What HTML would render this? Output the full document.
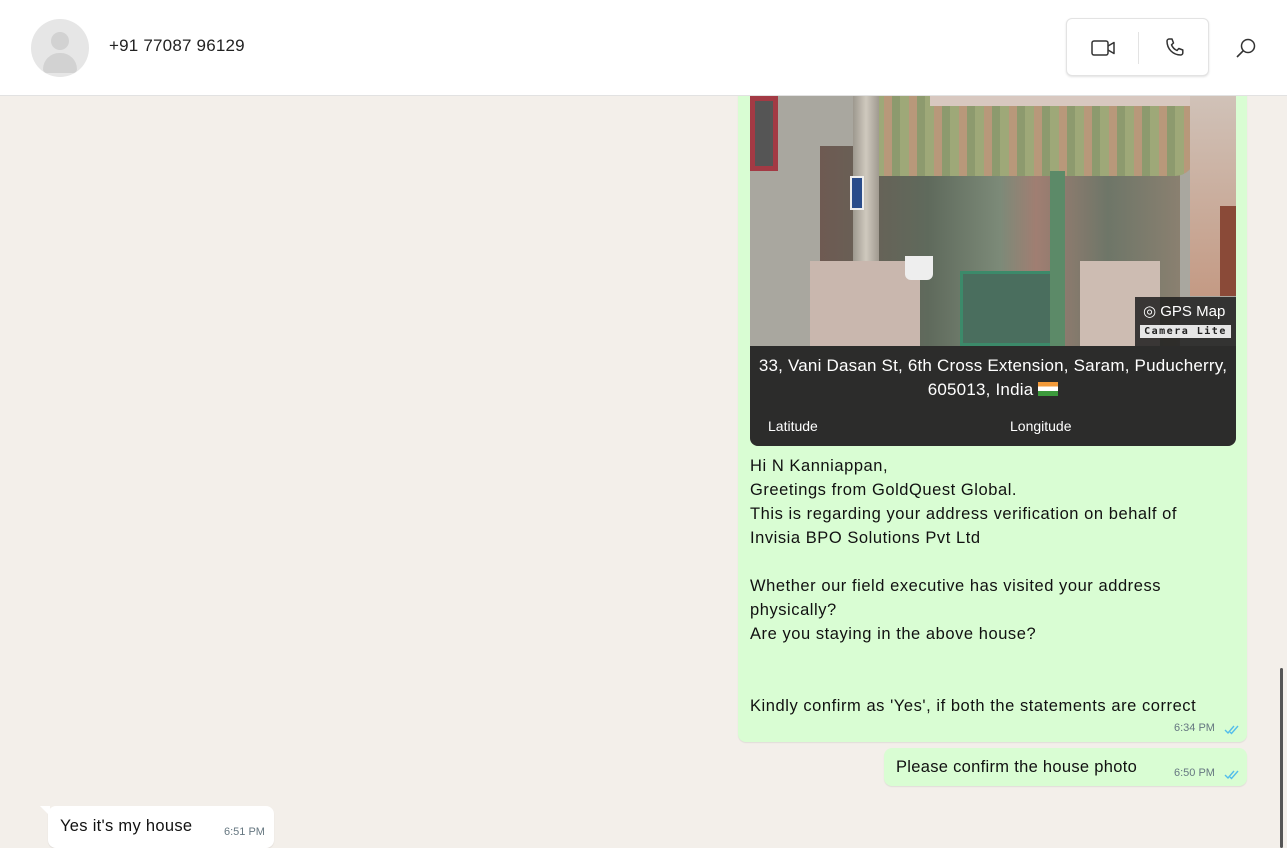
<!DOCTYPE html>
<html><head><meta charset="utf-8"><style>
*{margin:0;padding:0;box-sizing:border-box}
body{width:1287px;height:848px;overflow:hidden;font-family:"Segoe UI","Liberation Sans","DejaVu Sans",sans-serif;background:#f3efea;position:relative;color:#111}
.hdr{position:absolute;left:0;top:0;width:1287px;height:96px;background:#fff;border-bottom:1px solid #e2e2e2}
.av{position:absolute;left:31px;top:19px;width:58px;height:58px;border-radius:50%;background:#e6e6e6;overflow:hidden}
.av:before{content:"";position:absolute;left:20px;top:13px;width:18px;height:18px;border-radius:50%;background:#d2d2d2}
.av:after{content:"";position:absolute;left:12px;top:34px;width:34px;height:20px;border-radius:17px 17px 4px 4px;background:#d2d2d2}
.name{position:absolute;left:109px;top:36px;font-size:17px;color:#222;letter-spacing:.2px}
.btns{position:absolute;left:1066px;top:18px;width:143px;height:58px;border:1px solid #e3e3e3;border-radius:6px;box-shadow:0 1px 2px rgba(0,0,0,.12);background:#fff}
.btns .sep{position:absolute;left:71px;top:13px;width:1px;height:32px;background:#e3e3e3}
.bubble{position:absolute;background:#d9fdd3;border-radius:8px;box-shadow:0 1px 1px rgba(0,0,0,.08)}
.photo{position:absolute;left:750px;top:96px;width:486px;height:350px;border-radius:0 0 8px 8px;overflow:hidden;background:#a9a79f}
.photo div{position:absolute}
.cap{left:0;top:250px;width:486px;height:100px;background:rgba(22,22,22,.85)}
.addr{left:0;top:8px;width:486px;text-align:center;color:#fff;font-size:17px;line-height:24px;letter-spacing:.2px}
.lab{top:72px;color:#fff;font-size:14px}
.badge{left:385px;top:201px;width:101px;height:49px;background:rgba(30,30,30,.85)}
.g{left:8px;top:5px;color:#fff;font-size:15px}
.c{left:5px;top:28px;width:91px;height:13px;background:#e6e6e6;color:#222;font:bold 10px "DejaVu Sans Mono",monospace;letter-spacing:1.5px;text-align:center;line-height:13px}
.txt{position:absolute;left:750px;top:454px;font-size:16.5px;line-height:24px;color:#111;letter-spacing:.55px}
.time{position:absolute;font-size:11px;color:#667781}
.tick{position:absolute}
.sb{position:absolute;left:1280px;top:668px;width:3px;height:180px;background:#555;border-radius:2px}
</style></head><body>
<div class="bubble" style="left:738px;top:60px;width:509px;height:682px"></div>
<div class="photo">
 <div style="left:0;top:0;width:28px;height:75px;background:#555;border:5px solid #a33a44"></div>
 <div style="left:70px;top:50px;width:360px;height:200px;background:linear-gradient(90deg,#6e5a52,#5f6a5c 30%,#7c8a78 50%,#a07e72 60%,#6e7668 80%,#8a8070)"></div>
 <div style="left:125px;top:0;width:320px;height:80px;background:repeating-linear-gradient(90deg,#9ea878 0 9px,#b8987a 9px 17px,#8d9a6e 17px 25px);border-radius:0 0 20px 0"></div>
 <div style="left:180px;top:0;width:300px;height:10px;background:#d8c8c0"></div>
 <div style="left:440px;top:0;width:46px;height:200px;background:linear-gradient(#d0c2b8,#c49a84)"></div>
 <div style="left:470px;top:110px;width:16px;height:90px;background:#8a4a38"></div>
 <div style="left:103px;top:0;width:26px;height:250px;background:linear-gradient(90deg,#9d988e,#cfc9be,#a09a90)"></div>
 <div style="left:100px;top:80px;width:14px;height:34px;background:#2a4c8a;border:2px solid #eee"></div>
 <div style="left:60px;top:165px;width:110px;height:85px;background:#c9b7ae"></div>
 <div style="left:155px;top:160px;width:28px;height:24px;border-radius:0 0 6px 6px;background:#eee"></div>
 <div style="left:210px;top:175px;width:100px;height:75px;background:#4a6e5e;border:3px solid #3c8a6a"></div>
 <div style="left:300px;top:75px;width:15px;height:175px;background:#5c8a68"></div>
 <div style="left:330px;top:165px;width:80px;height:85px;background:#cdbcb2"></div>
 <div class="badge"><div class="g">◎ GPS Map</div><div class="c">Camera Lite</div></div>
 <div class="cap"><div class="addr">33, Vani Dasan St, 6th Cross Extension, Saram, Puducherry,<br>605013, India <span style="display:inline-block;width:20px;height:14px;vertical-align:-1px;background:linear-gradient(#f29a3a 0 33%,#fff 33% 66%,#3c9a3c 66%)"></span></div>
 <div class="lab" style="left:18px">Latitude</div><div class="lab" style="left:260px">Longitude</div></div>
</div>
<div class="txt">Hi N Kanniappan,<br>Greetings from GoldQuest Global.<br>This is regarding your address verification on behalf of<br>Invisia BPO Solutions Pvt Ltd<br><br>Whether our field executive has visited your address<br>physically?<br>Are you staying in the above house?<br><br><br>Kindly confirm as 'Yes', if both the statements are correct</div>
<div class="time" style="left:1174px;top:722px">6:34 PM</div>
<svg class="tick" style="left:1224px;top:724px" width="16" height="11" viewBox="0 0 16 11"><path d="M1 6l3 3 6-7M6 8l1.5 1.5L14 2" fill="none" stroke="#53bdeb" stroke-width="1.4"/></svg>

<div class="bubble" style="left:884px;top:748px;width:363px;height:38px"></div>
<div class="txt" style="left:896px;top:755px;letter-spacing:.3px">Please confirm the house photo</div>
<div class="time" style="left:1174px;top:767px">6:50 PM</div>
<svg class="tick" style="left:1224px;top:769px" width="16" height="11" viewBox="0 0 16 11"><path d="M1 6l3 3 6-7M6 8l1.5 1.5L14 2" fill="none" stroke="#53bdeb" stroke-width="1.4"/></svg>

<div class="bubble" style="left:48px;top:806px;width:226px;height:42px;background:#fff"></div>
<div style="position:absolute;left:40px;top:806px;width:0;height:0;border-top:10px solid #fff;border-left:10px solid transparent"></div>
<div class="txt" style="left:60px;top:814px;letter-spacing:.3px">Yes it's my house</div>
<div class="time" style="left:224px;top:826px">6:51 PM</div>

<div class="hdr">
 <div class="av"></div>
 <div class="name">+91 77087 96129</div>
 <div class="btns"><div class="sep"></div>
  <svg style="position:absolute;left:24px;top:19px" width="26" height="20" viewBox="0 0 26 20"><rect x="1" y="3" width="16" height="14" rx="2" fill="none" stroke="#333" stroke-width="1.5"/><path d="M17 8l6-3.5v11L17 12" fill="none" stroke="#333" stroke-width="1.5" stroke-linejoin="round"/></svg>
  <svg style="position:absolute;left:96px;top:17px" width="24" height="24" viewBox="0 0 24 24"><path d="M6 3l3 0 1.5 4-2 1.8c1 2.5 3 4.6 5.5 5.7l1.8-2 4 1.5v3c0 1-1 2-2 2C10 19 4 13 4 5c0-1 1-2 2-2z" fill="none" stroke="#333" stroke-width="1.5" stroke-linejoin="round"/></svg>
 </div>
 <svg style="position:absolute;left:1235px;top:37px" width="22" height="22" viewBox="0 0 22 22"><circle cx="13" cy="9" r="6.5" fill="none" stroke="#333" stroke-width="1.5"/><path d="M8.3 13.7L2 20" stroke="#333" stroke-width="1.6"/></svg>
</div>
<div class="sb"></div>
</body></html>
